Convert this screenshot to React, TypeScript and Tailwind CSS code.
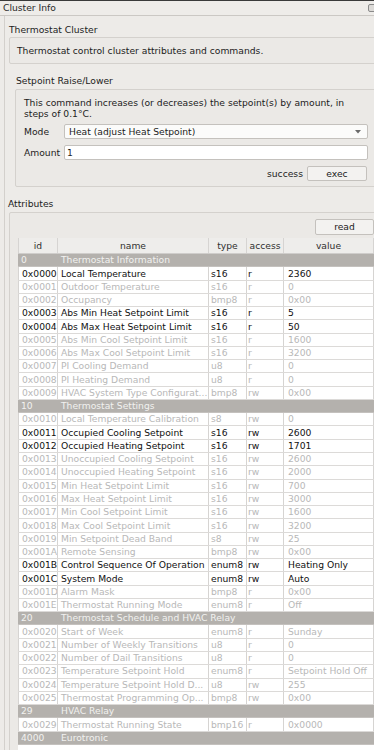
import React from "react";

type Row =
  | { s: true; id: string; name: string }
  | { s?: false; id: string; name: string; type: string; access: string; value: string; en?: boolean };

const rows: Row[] = [
  { s: true, id: "0", name: "Thermostat Information" },
  { id: "0x0000", name: "Local Temperature", type: "s16", access: "r", value: "2360", en: true },
  { id: "0x0001", name: "Outdoor Temperature", type: "s16", access: "r", value: "0" },
  { id: "0x0002", name: "Occupancy", type: "bmp8", access: "r", value: "0x00" },
  { id: "0x0003", name: "Abs Min Heat Setpoint Limit", type: "s16", access: "r", value: "5", en: true },
  { id: "0x0004", name: "Abs Max Heat Setpoint Limit", type: "s16", access: "r", value: "50", en: true },
  { id: "0x0005", name: "Abs Min Cool Setpoint Limit", type: "s16", access: "r", value: "1600" },
  { id: "0x0006", name: "Abs Max Cool Setpoint Limit", type: "s16", access: "r", value: "3200" },
  { id: "0x0007", name: "PI Cooling Demand", type: "u8", access: "r", value: "0" },
  { id: "0x0008", name: "PI Heating Demand", type: "u8", access: "r", value: "0" },
  { id: "0x0009", name: "HVAC System Type Configurat...", type: "bmp8", access: "rw", value: "0x00" },
  { s: true, id: "10", name: "Thermostat Settings" },
  { id: "0x0010", name: "Local Temperature Calibration", type: "s8", access: "rw", value: "0" },
  { id: "0x0011", name: "Occupied Cooling Setpoint", type: "s16", access: "rw", value: "2600", en: true },
  { id: "0x0012", name: "Occupied Heating Setpoint", type: "s16", access: "rw", value: "1701", en: true },
  { id: "0x0013", name: "Unoccupied Cooling Setpoint", type: "s16", access: "rw", value: "2600" },
  { id: "0x0014", name: "Unoccupied Heating Setpoint", type: "s16", access: "rw", value: "2000" },
  { id: "0x0015", name: "Min Heat Setpoint Limit", type: "s16", access: "rw", value: "700" },
  { id: "0x0016", name: "Max Heat Setpoint Limit", type: "s16", access: "rw", value: "3000" },
  { id: "0x0017", name: "Min Cool Setpoint Limit", type: "s16", access: "rw", value: "1600" },
  { id: "0x0018", name: "Max Cool Setpoint Limit", type: "s16", access: "rw", value: "3200" },
  { id: "0x0019", name: "Min Setpoint Dead Band", type: "s8", access: "rw", value: "25" },
  { id: "0x001A", name: "Remote Sensing", type: "bmp8", access: "rw", value: "0x00" },
  { id: "0x001B", name: "Control Sequence Of Operation", type: "enum8", access: "rw", value: "Heating Only", en: true },
  { id: "0x001C", name: "System Mode", type: "enum8", access: "rw", value: "Auto", en: true },
  { id: "0x001D", name: "Alarm Mask", type: "bmp8", access: "r", value: "0x00" },
  { id: "0x001E", name: "Thermostat Running Mode", type: "enum8", access: "r", value: "Off" },
  { s: true, id: "20", name: "Thermostat Schedule and HVAC Relay" },
  { id: "0x0020", name: "Start of Week", type: "enum8", access: "r", value: "Sunday" },
  { id: "0x0021", name: "Number of Weekly Transitions", type: "u8", access: "r", value: "0" },
  { id: "0x0022", name: "Number of Dail Transitions", type: "u8", access: "r", value: "0" },
  { id: "0x0023", name: "Temperature Setpoint Hold", type: "enum8", access: "r", value: "Setpoint Hold Off" },
  { id: "0x0024", name: "Temperature Setpoint Hold D...", type: "u8", access: "rw", value: "255" },
  { id: "0x0025", name: "Thermostat Programming Op...", type: "bmp8", access: "rw", value: "0x00" },
  { s: true, id: "29", name: "HVAC Relay" },
  { id: "0x0029", name: "Thermostat Running State", type: "bmp16", access: "r", value: "0x0000" },
  { s: true, id: "4000", name: "Eurotronic" },
];

const cell = "h-full flex items-center overflow-hidden whitespace-nowrap border-r border-[#d6d4d2]";

export default function App() {
  return (
    <div
      className="w-[374px] h-[750px] overflow-hidden bg-[#edebe8] text-[#1c1c1c] relative"
      style={{ fontFamily: '"DejaVu Sans", Verdana, sans-serif', fontSize: "9.2px" }}
    >
      <div className="w-[400px]">
        <div className="h-[1px] bg-[#3a3a3a]" />
        <div className="h-[15px] flex items-center pl-[3px] border-b border-[#cbc8c4] bg-[#eeece9] relative">
          <span className="text-[#2a2a2a]">Cluster Info</span>
          <div className="absolute left-[368px] top-[3px] w-[8px] h-[8px] border border-[#8a8a8a] rounded-[2px] bg-[#dcdad7]" />
        </div>
        <div className="border-l border-[#d3d0cc] ml-[4px] pl-[3px]">
          <div className="h-[20px] flex items-end pl-[1px] leading-[12px]">Thermostat Cluster</div>
          <div className="h-[1px]" />
          <div className="h-[27px] ml-[1px] border border-[#d4d1cd] rounded-[2px] bg-[#ebe9e6] flex items-center pl-[7px]">
            Thermostat control cluster attributes and commands.
          </div>
          <div className="ml-[7px]">
            <div className="h-[25px] flex items-end pl-[1px] pb-[1px]">Setpoint Raise/Lower</div>
            <div className="h-[98px] border border-[#d4d1cd] rounded-[2px] bg-[#ebe9e6] pl-[8px] pt-[7px]">
              <div className="leading-[11px]">
                This command increases (or decreases) the setpoint(s) by amount, in
                <br />
                steps of 0.1°C.
              </div>
              <div className="flex items-center mt-[5px] h-[15px]">
                <span className="w-[40px]">Mode</span>
                <div className="w-[304px] h-[15px] border border-[#c4c1bd] rounded-[2px] bg-[#fbfbfa] flex items-center pl-[4px] relative">
                  <span>Heat (adjust Heat Setpoint)</span>
                  <svg className="absolute right-[6px] top-[5px]" width="6" height="4" viewBox="0 0 6 4">
                    <path d="M0 0 L6 0 L3 3.5 Z" fill="#6a6a6a" />
                  </svg>
                </div>
              </div>
              <div className="flex items-center mt-[6px] h-[15px]">
                <span className="w-[40px]">Amount</span>
                <div className="w-[304px] h-[15px] border border-[#c4c1bd] rounded-[2px] bg-white flex items-center pl-[2px]">
                  1
                </div>
              </div>
              <div className="flex items-center mt-[6px] h-[15px]">
                <span className="ml-[243px] w-[40px]">success</span>
                <div className="w-[60px] h-[15px] border border-[#c4c1bd] rounded-[2px] bg-[#f3f2f0] flex items-center justify-center">
                  exec
                </div>
              </div>
            </div>
          </div>
          <div className="h-[25px] flex items-end pb-[1px]">Attributes</div>
          <div className="ml-[1px] h-[600px] border border-[#d4d1cd] rounded-[2px] bg-[#ebe9e6] pl-[8px] pt-[6px]">
            <div className="flex h-[16px]">
              <div className="ml-[297px] w-[59px] h-[16px] border border-[#c4c1bd] rounded-[2px] bg-[#f3f2f0] flex items-center justify-center">
                read
              </div>
            </div>
            <div className="mt-[3px] w-[400px] bg-white">
              <div className="flex h-[16px] bg-[#eeedeb] border-b border-[#cfcdcb] text-[#303030]">
                <div className={`${cell} w-[40px] justify-center border-l`}>id</div>
                <div className={`${cell} w-[151px] justify-center`}>name</div>
                <div className={`${cell} w-[38px] justify-center`}>type</div>
                <div className={`${cell} w-[37px] justify-center`}>access</div>
                <div className={`${cell} w-[90px] justify-center`}>value</div>
              </div>
              {rows.map((r, i) =>
                r.s ? (
                  <div key={i} className="flex h-[13.28px] bg-[#b4b1ad] text-[#f2f1f0] border-b border-[#c4c1be]">
                    <div className="w-[40px] pl-[3px] flex items-center whitespace-nowrap">{r.id}</div>
                    <div className="pl-[3px] flex items-center whitespace-nowrap">{r.name}</div>
                  </div>
                ) : (
                  <div
                    key={i}
                    className={`flex h-[13.28px] border-b border-[#dcdad8] ${r.en ? "text-[#111]" : "text-[#b8b8b8]"}`}
                  >
                    <div className={`${cell} w-[40px] pl-[3px] border-l`}>{r.id}</div>
                    <div className={`${cell} w-[151px] pl-[3px]`}>{r.name}</div>
                    <div className={`${cell} w-[38px] pl-[2px]`}>{r.type}</div>
                    <div className={`${cell} w-[37px] pl-[1px]`}>{r.access}</div>
                    <div className={`${cell} w-[90px] pl-[4px]`}>{r.value}</div>
                  </div>
                )
              )}
              <div className="h-[20px] bg-white" />
            </div>
          </div>
        </div>
      </div>
    </div>
  );
}
